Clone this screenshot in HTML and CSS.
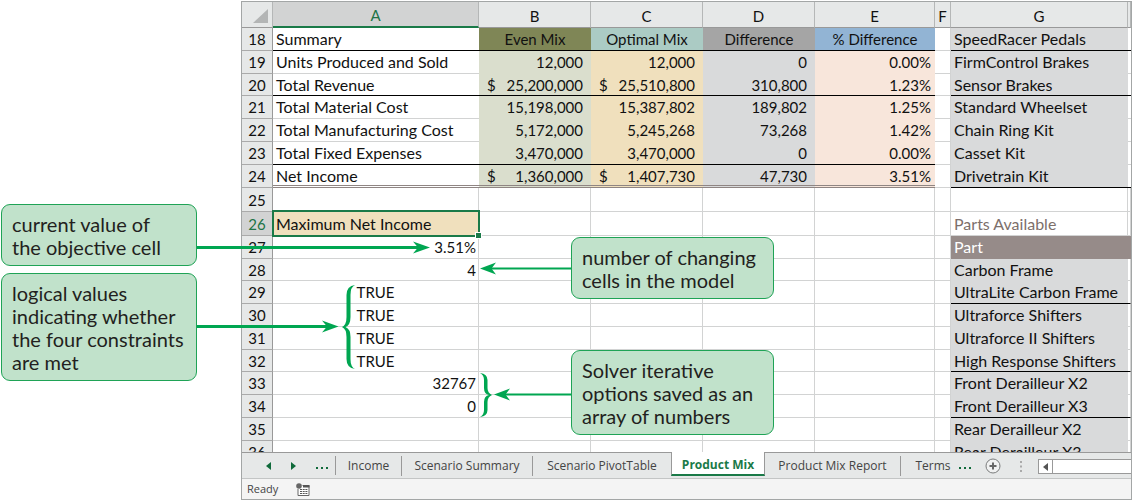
FILE: index.html
```html
<!DOCTYPE html>
<html lang="en">
<head>
<meta charset="utf-8">
<title>Product Mix</title>
<link rel="stylesheet" href="styles.css">
</head>
<body>
<main class="figure">
  <aside class="notes">
    <p class="callout">current value of<br>the objective cell</p>
    <p class="callout">logical values<br>indicating whether<br>the four constraints<br>are met</p>
  </aside>
  <section class="window">
    <table class="sheet">
      <colgroup><col class="w-row"><col class="w-a"><col class="w-b"><col class="w-b"><col class="w-b"><col class="w-e"><col class="w-f"><col class="w-g"><col></colgroup>
      <thead>
        <tr><th class="corner"><svg width="15" height="14" viewBox="0 0 15 14"><path d="M15 0V14H0Z" fill="#b3b5b5"/></svg></th><th class="picked">A</th><th>B</th><th>C</th><th>D</th><th>E</th><th>F</th><th>G</th><th></th></tr>
      </thead>
      <tbody class="summary">
        <tr class="rule"><th>18</th><td class="label">Summary</td><td class="even-h">Even Mix</td><td class="opt-h">Optimal Mix</td><td class="diff-h">Difference</td><td class="pct-h">% Difference</td><td class="f"></td><td class="part line">SpeedRacer Pedals</td><td class="line"></td></tr>
        <tr><th>19</th><td class="label">Units Produced and Sold</td><td class="even">12,000</td><td class="opt">12,000</td><td class="diff">0</td><td class="pct">0.00%</td><td class="f"></td><td class="part">FirmControl Brakes</td><td></td></tr>
        <tr class="rule short"><th>20</th><td class="label">Total Revenue</td><td class="even"><span class="money"><span>$</span><span>25,200,000</span></span></td><td class="opt"><span class="money"><span>$</span><span>25,510,800</span></span></td><td class="diff">310,800</td><td class="pct">1.23%</td><td class="f"></td><td class="part line">Sensor Brakes</td><td class="line"></td></tr>
        <tr><th>21</th><td class="label">Total Material Cost</td><td class="even">15,198,000</td><td class="opt">15,387,802</td><td class="diff">189,802</td><td class="pct">1.25%</td><td class="f"></td><td class="part">Standard Wheelset</td><td></td></tr>
        <tr><th>22</th><td class="label">Total Manufacturing Cost</td><td class="even">5,172,000</td><td class="opt">5,245,268</td><td class="diff">73,268</td><td class="pct">1.42%</td><td class="f"></td><td class="part">Chain Ring Kit</td><td></td></tr>
        <tr class="rule"><th>23</th><td class="label">Total Fixed Expenses</td><td class="even">3,470,000</td><td class="opt">3,470,000</td><td class="diff">0</td><td class="pct">0.00%</td><td class="f"></td><td class="part">Casset Kit</td><td class="plain"></td></tr>
        <tr class="total"><th>24</th><td class="label">Net Income</td><td class="even"><span class="money"><span>$</span><span>1,360,000</span></span></td><td class="opt"><span class="money"><span>$</span><span>1,407,730</span></span></td><td class="diff">47,730</td><td class="pct">3.51%</td><td class="f"></td><td class="part line">Drivetrain Kit</td><td class="line"></td></tr>
      </tbody>
      <tbody>
        <tr class="tall"><th>25</th><td></td><td></td><td></td><td></td><td></td><td></td><td></td><td></td></tr>
        <tr class="tall"><th class="picked">26</th><td class="label selected">Maximum Net Income</td><td></td><td></td><td></td><td></td><td></td><td class="heading">Parts Available</td><td></td></tr>
        <tr><th>27</th><td class="num">3.51%</td><td></td><td></td><td></td><td></td><td></td><td class="band">Part</td><td class="band"></td></tr>
        <tr class="short"><th>28</th><td class="num">4</td><td></td><td></td><td></td><td></td><td></td><td class="part">Carbon Frame</td><td></td></tr>
        <tr><th>29</th><td class="bool">TRUE</td><td></td><td></td><td></td><td></td><td></td><td class="part line">UltraLite Carbon Frame</td><td class="line"></td></tr>
        <tr><th>30</th><td class="bool">TRUE</td><td></td><td></td><td></td><td></td><td></td><td class="part">Ultraforce Shifters</td><td></td></tr>
        <tr><th>31</th><td class="bool">TRUE</td><td></td><td></td><td></td><td></td><td></td><td class="part">Ultraforce II Shifters</td><td></td></tr>
        <tr class="short"><th>32</th><td class="bool">TRUE</td><td></td><td></td><td></td><td></td><td></td><td class="part line">High Response Shifters</td><td class="line"></td></tr>
        <tr><th>33</th><td class="num">32767</td><td></td><td></td><td></td><td></td><td></td><td class="part">Front Derailleur X2</td><td></td></tr>
        <tr><th>34</th><td class="num">0</td><td></td><td></td><td></td><td></td><td></td><td class="part line">Front Derailleur X3</td><td class="line"></td></tr>
        <tr><th>35</th><td></td><td></td><td></td><td></td><td></td><td></td><td class="part">Rear Derailleur X2</td><td></td></tr>
        <tr class="cut"><th><div class="peek">36</div></th><td></td><td></td><td></td><td></td><td></td><td></td><td class="part"><div class="peek">Rear Derailleur X3</div></td><td></td></tr>
      </tbody>
    </table>
    <nav class="tabs" aria-label="Sheets">
      <div class="steps">
        <button aria-label="Previous sheet"><svg width="5" height="8" viewBox="0 0 5 8"><path d="M5 0V8L0 4Z" fill="#0f6a3a"/></svg></button>
        <button aria-label="Next sheet"><svg width="5" height="8" viewBox="0 0 5 8"><path d="M0 0V8L5 4Z" fill="#0f6a3a"/></svg></button>
        <button class="more" aria-label="More sheets"><svg width="12" height="2" viewBox="0 0 12 2"><path d="M0 0h2v2H0zM5 0h2v2H5zM10 0h2v2h-2z" fill="#0f6a3a"/></svg></button>
      </div>
      <button class="tab">Income</button>
      <button class="tab">Scenario Summary</button>
      <button class="tab">Scenario PivotTable</button>
      <button class="tab active">Product Mix</button>
      <button class="tab">Product Mix Report</button>
      <button class="tab last">Terms</button>
      <button class="tool more" aria-label="More sheets"><svg width="12" height="2" viewBox="0 0 12 2"><path d="M0 0h2v2H0zM5 0h2v2H5zM10 0h2v2h-2z" fill="#0f6a3a"/></svg></button>
      <button class="tool" aria-label="New sheet"><svg width="16" height="16" viewBox="0 0 16 16"><circle cx="8" cy="8" r="7" fill="#f0f1f1" stroke="#7b7d7d"/><path d="M8 4.500V11.500M4.500 8H11.500" stroke="#666" stroke-width="2"/></svg></button>
      <svg class="grip" width="2" height="11" viewBox="0 0 2 11"><path d="M0 0h2v2H0zM0 4.500h2v2H0zM0 9h2v2H0z" fill="#aaa"/></svg>
      <div class="scroll"><button aria-label="Scroll left"><svg width="5" height="8" viewBox="0 0 5 8"><path d="M5 0V8L0 4Z" fill="#555"/></svg></button></div>
    </nav>
    <footer class="status">
      <span>Ready</span>
      <svg width="14" height="13" viewBox="0 0 14 13"><path d="M6.500 2.500H13V12.500H2V6" fill="#fff" stroke="#666"/><path d="M7 2h6.500v2.500H7z" fill="#555"/><circle cx="3" cy="3" r="2.800" fill="#666"/><path d="M4 6.500h7.500M4 8.500h7.500M4 10.500h7.500" stroke="#555" stroke-dasharray="2 .7"/></svg>
    </footer>
  </section>
  <p class="callout over changing">number of changing<br>cells in the model</p>
  <p class="callout over options">Solver iterative<br>options saved as an<br>array of numbers</p>
  <svg class="links" width="580" height="440" viewBox="0 0 580 440">
    <g fill="none" stroke="#00a651"><path d="M197 247.500H420M197 326.500H329" stroke-width="3"/><path d="M490 268.500H571M504 394.500H571" stroke-width="2"/></g>
    <g fill="#00a651">
      <path d="M430 247.500L413 241.500L418 247.500L413 253.500Z"/>
      <path d="M338.500 326.500L322 320.500L327 326.500L322 332.500Z"/>
      <path d="M480 268.500L496 262.500L491.500 268.500L496 274.500Z"/>
      <path d="M494 394.500L510 388.500L505.500 394.500L510 400.500Z"/>
      <path d="M355 285Q346.500 286 346.500 295V317Q346.500 325 342 327Q346.500 329 346.500 337V359Q346.500 368 355 369Q350.500 367 350.500 359V337Q350.500 329 345.500 327Q350.500 325 350.500 317V295Q350.500 287 355 285Z"/>
      <path d="M480 373Q487.500 374 487.500 380V388Q487.500 393 492 395Q487.500 397 487.500 402V410Q487.500 416 480 417Q484 415 484 410V402Q484 396 489 395Q484 394 484 388V380Q484 375 480 373Z"/>
    </g>
  </svg>
</main>
</body>
</html>
```
FILE: styles.css
```css
* { box-sizing: border-box; }
body { margin: 0; background: #fff; }
button { margin: 0; padding: 0; border: 0; background: none; color: inherit; font: inherit; }

.figure { position: relative; display: flex; align-items: flex-start; padding: 1px 1px 1px 0; }
.notes { flex: 0 0 241px; display: flex; flex-direction: column; gap: 7px; padding: 203px 44px 0 1px; }
.callout {
  margin: 0; padding: 8px 10px 6px; border: 1px solid #1fa356; border-radius: 9px;
  background: #c1e2cb; color: #231f20; font: 20px/23px Lato, sans-serif; white-space: nowrap;
}
.over { position: absolute; left: 571px; width: 203px; }
.changing { top: 237px; }
.options { top: 350px; }
.links { position: absolute; left: 0; top: 0; pointer-events: none; }

.window { flex: 1; min-width: 0; border: 1px solid #a3a6a6; background: #fff; }

.sheet { width: 100%; table-layout: fixed; border-collapse: separate; border-spacing: 0; font: 15px/18px Lato, sans-serif; color: #111; }
.w-row { width: 31px; }
.w-a { width: 206px; }
.w-b { width: 112px; }
.w-e { width: 120px; }
.w-f { width: 16px; }
.w-g { width: 177px; }
.sheet th, .sheet td { padding: 0 3px; overflow: hidden; white-space: nowrap; }
.sheet th { font-weight: 400; text-align: center; background: #e6e8e8; border-right: 1px solid #999; border-bottom: 1px solid #aaa; padding: 0; }
.sheet thead th { height: 26px; border-right-color: #b5b7b7; border-bottom-color: #999; padding-top: 2px; }
.sheet thead .corner { padding: 2px 4px 0 0; text-align: right; line-height: 0; }
.sheet thead .picked { background: #d2d3d3; color: #217346; border-bottom: 2px solid #1a7a48; }
.sheet td { text-align: left; border-right: 1px solid #d2d3d3; border-bottom: 1px solid #d2d3d3; }
.sheet tbody tr { height: 23px; }
.sheet tbody .short { height: 22px; }
.sheet tbody .tall { height: 24px; }
.sheet tbody .cut { height: 11px; }
.sheet tbody .cut > * { border-bottom: 0; vertical-align: top; }
.peek { height: 11px; padding-top: 2px; overflow: hidden; }
.sheet tbody .picked { background: #d2d3d3; color: #217346; }
.label, .part, .heading, .band { font-size: 16px; }

.summary td { border-right: 0; }
.summary .f { border-right: 1px solid #d2d3d3; }
.sheet .summary td:not(.f) { border-right: 0; }
.sheet .rule td:not(.f):not(.plain):not(.part), .sheet td.line { border-bottom-color: #000; }
.sheet .even-h, .sheet .opt-h, .sheet .diff-h, .sheet .pct-h { text-align: center; }
.even-h { background: #7f8656; }
.opt-h { background: #abcbc4; }
.diff-h { background: #a5a5a5; }
.pct-h { background: #92b4d4; }
.sheet .even, .sheet .opt, .sheet .diff { text-align: right; padding: 0 8px; border-bottom-color: transparent; }
.sheet .pct { text-align: right; padding-right: 4px; border-bottom-color: transparent; }
.even { background: #dadecd; }
.opt { background: #f0e0bd; }
.diff { background: #d9dadb; }
.pct { background: #f8e6db; }
.money { display: flex; justify-content: space-between; }
.sheet .total td:not(.f):not(.part):not(.line) { border-bottom: 3px double #8f8583; padding-top: 2px; }
.sheet .part { background: #d9dadb; border-right: 0; border-bottom-color: #d9dadb; }
.sheet .part.line { border-bottom-color: #000; }
.sheet .heading { color: #7d6f6b; }
.sheet .band { background: #968b89; color: #fff; border-color: #968b89; }
.sheet .num { text-align: right; padding-right: 2px; }
.sheet .bool { text-align: center; }
.sheet td.selected { position: relative; overflow: visible; background: #f0e0bd; }
.selected::before { content: ""; position: absolute; inset: -2px -2px -2px -1px; border: 2px solid #1a7a48; }
.selected::after { content: ""; position: absolute; right: -3px; bottom: -3px; width: 5px; height: 5px; background: #1a7a48; outline: 1px solid #fff; }

.tabs {
  display: grid; grid-template-columns: 94px 66px 131px 138px 94px 136px 50px 28px 28px 28px 1fr;
  height: 27px; border-top: 1px solid #999; border-bottom: 1px solid #c3c5c5; background: #e6e8e8;
  font: 12px/18px "Open Sans", sans-serif; color: #444;
}
.steps { display: flex; align-items: center; gap: 20px; height: 19px; margin: 3px 0; padding-left: 24px; border-right: 1px solid #999; }
.steps button, .tool { display: flex; align-items: center; justify-content: center; }
.more { margin-top: 4px; }
.tab { margin: 3px 0; border-right: 1px solid #999; white-space: nowrap; }
.tab.last { border-right: 0; padding-left: 14px; }
.tab:has(+ .active) { border-right: 0; }
.tab.active { margin: -1px 0 3px; padding-top: 4px; border: 1px solid #999; border-width: 0 1px 2px; border-bottom-color: #1a7a48; background: #fff; color: #1a7a48; font-weight: 700; }
.grip { align-self: center; justify-self: center; }
.scroll { margin: 6px 0 5px 3px; border: 1px solid #999; border-right: 0; background: #fff; display: flex; }
.scroll button { width: 14px; border-right: 1px solid #999; display: flex; align-items: center; justify-content: center; }
.status { display: flex; align-items: center; gap: 18px; height: 20px; padding: 0 5px; background: #f4f4f4; font: 11px/16px "Open Sans", sans-serif; color: #444; }
```
